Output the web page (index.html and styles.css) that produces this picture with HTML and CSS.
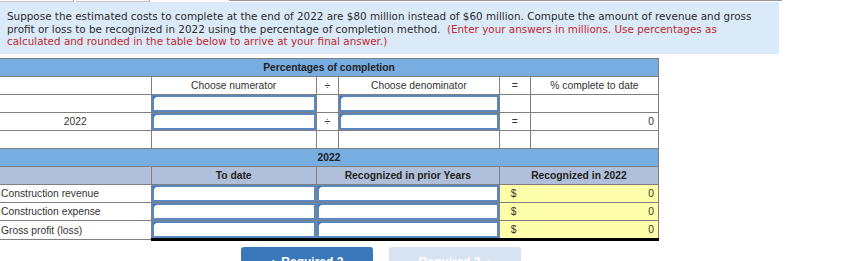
FILE: index.html
```html
<!DOCTYPE html>
<html lang="en">
<head>
    <meta charset="UTF-8">
    <meta name="viewport" content="width=device-width, initial-scale=1.0">
    <title>Percentage of completion</title>
    <link rel="stylesheet" href="styles.css">
</head>
<body>
    <!-- tab strip, scrolled nearly out of view -->
    <div class="tabs">
        <span class="tab"></span>
        <span class="tab"></span>
        <span class="tab active"></span>
        <span class="tab-rest"></span>
    </div>

    <div class="prompt">
        Suppose the estimated costs to complete at the end of 2022 are $80 million instead of $60 million. Compute the amount of revenue and gross
        profit or loss to be recognized in 2022 using the percentage of completion method. &nbsp;<span class="note">(Enter your answers in millions. Use percentages as
        calculated and rounded in the table below to arrive at your final answer.)</span>
    </div>

    <!-- percent complete -->
    <table class="grid pct">
        <colgroup>
            <col style="width:151px"><col style="width:165px"><col style="width:22px">
            <col style="width:161px"><col style="width:31px"><col style="width:128px">
        </colgroup>
        <tr class="band"><th colspan="6">Percentages of completion</th></tr>
        <tr>
            <td></td>
            <td class="c">Choose numerator</td>
            <td class="c">÷</td>
            <td class="c">Choose denominator</td>
            <td class="c">=</td>
            <td class="c">% complete to date</td>
        </tr>
        <tr>
            <td></td>
            <td class="entry"><span class="field"><input type="text"></span></td>
            <td></td>
            <td class="entry"><span class="field"><input type="text"></span></td>
            <td></td>
            <td></td>
        </tr>
        <tr>
            <td class="c">2022</td>
            <td class="entry"><span class="field"><input type="text"></span></td>
            <td class="c">÷</td>
            <td class="entry"><span class="field"><input type="text"></span></td>
            <td class="c">=</td>
            <td class="num">0</td>
        </tr>
        <tr>
            <td></td><td></td><td></td><td></td><td></td><td></td>
        </tr>
    </table>

    <!-- revenue and gross profit -->
    <table class="grid results">
        <colgroup>
            <col style="width:151px"><col style="width:165px">
            <col style="width:183px"><col style="width:159px">
        </colgroup>
        <tr class="band"><th colspan="4">2022</th></tr>
        <tr class="sub">
            <th></th>
            <th>To date</th>
            <th>Recognized in prior Years</th>
            <th>Recognized in 2022</th>
        </tr>
        <tr>
            <td class="label">Construction revenue</td>
            <td class="entry"><span class="field"><input type="text"></span></td>
            <td class="entry"><span class="field"><input type="text"></span></td>
            <td class="calc"><span>$</span><span>0</span></td>
        </tr>
        <tr>
            <td class="label">Construction expense</td>
            <td class="entry"><span class="field"><input type="text"></span></td>
            <td class="entry"><span class="field"><input type="text"></span></td>
            <td class="calc"><span>$</span><span>0</span></td>
        </tr>
        <tr class="total">
            <td class="label">Gross profit (loss)</td>
            <td class="entry"><span class="field"><input type="text"></span></td>
            <td class="entry"><span class="field"><input type="text"></span></td>
            <td class="calc"><span>$</span><span>0</span></td>
        </tr>
    </table>

    <div class="nav">
        <button class="btn prev">&#8249;&nbsp;&nbsp;Required 2</button>
        <button class="btn next" disabled>Required 3&nbsp;&nbsp;&#8250;</button>
    </div>
</body>
</html>
```

FILE: styles.css
```css
body{
    margin: 0;
    font-family: "Liberation Sans", Arial, sans-serif;
    color: #333;
}
.tabs{ display: flex; height: 2px; }
.tab{
    width: 73px; margin-right: 2px;
    border-bottom: 1px solid #c8c8c8;
    border-right: 1px solid #999;
}
.tab.active{ width: 75px; border: none; }
.tab-rest{ width: 553px; border-top: 1px solid #999; }

.prompt{ /* question box */
    width: 765px;
    background-color: #dbeaf8;
    padding: 8px 7px 6px 7px;
    font-family: "DejaVu Sans", Verdana, sans-serif;
    font-size: 10.4px; line-height: 12.7px;
    color: #2b2b2b;
}
.note{ color: #c1272d; }

.grid{
    border-collapse: collapse;
    table-layout: fixed;
    font-size: 10.3px;
}
.grid td, .grid th{
    height: 17px; padding: 0;
    border: 1px solid #808080;
    white-space: nowrap;
}
.grid tr > :first-child{ border-left: none; }
.pct{ width: 659px; margin-top: 4px; }
.results{ width: 659px; }
.results tr:first-child > *{ border-top: none; }

.band th{ /* blue group header */
    background-color: #78ade2;
    color: #222; font-weight: bold;
    text-align: center;
}
.sub th{
    background-color: #b1c0da;
    color: #222; font-weight: bold;
    text-align: center;
}
.c{ text-align: center; }
.num{ text-align: right; padding-right: 4px !important; }
.label{ padding-left: 1px !important; }

.entry{ padding: 0; }
.field{ position: relative; display: block; height: 17px; }
.field::before{ /* little corner marker */
    content: ""; position: absolute; left: 1px; top: 1px; z-index: 1;
    border-top: 4px solid #3d78c5; border-right: 4px solid transparent;
}
.field input{
    display: block; box-sizing: border-box;
    width: 100%; height: 17px; margin: 0;
    border: 2px solid #5a87c0; background: #fff;
}

.calc{
    background-color: #ffffab;
    padding: 0 4px 0 11px !important;
}
.calc span:last-child{ float: right; }
.total td{ border-top: 1px solid #000; }
.total td.label{ border-top-color: #808080; }
.total td:not(.label){ border-bottom: 3px solid #000; }

.nav{
    display: flex; gap: 16px;
    padding-left: 241px; margin-top: 6px;
}
.btn{
    width: 132px; height: 30px;
    border: none; border-radius: 3px;
    font-family: "Liberation Sans", Arial, sans-serif;
    font-size: 12px; font-weight: bold; color: #fff;
}
.prev{ background-color: #3a77bb; }
.next{ background-color: #d8e3f1; }
```
